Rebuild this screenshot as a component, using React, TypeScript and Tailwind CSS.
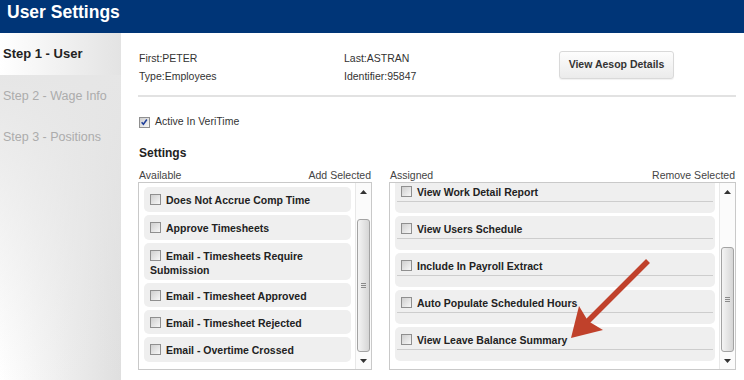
import React from "react";

function Box({ checked = false }: { checked?: boolean }) {
  return (
    <span className="relative inline-block w-[11px] h-[11px] border border-[#8f8f8f] bg-linear-to-br from-[#cfcfcf] to-[#f7f7f7] align-[-1px] mr-[5px] shrink-0">
      {checked && (
        <svg viewBox="0 0 10 10" className="absolute left-0 top-0 w-[9px] h-[9px]">
          <path d="M1.8 4.6 L3.8 7 L7.6 1.6" fill="none" stroke="#21409a" strokeWidth="1.7" />
        </svg>
      )}
    </span>
  );
}

function Arrow({ up }: { up: boolean }) {
  return (
    <div className="h-[17px] flex items-center justify-center">
      <svg width="7" height="4" viewBox="0 0 7 4">
        {up ? <polygon points="0,4 7,4 3.5,0" fill="#333" /> : <polygon points="0,0 7,0 3.5,4" fill="#333" />}
      </svg>
    </div>
  );
}

function Scrollbar({ offset }: { offset: "left" | "right" }) {
  return (
    <div className="w-[16px] flex flex-col bg-[#fbfbfb] border-l border-[#e8e8e8]">
      <Arrow up />
      <div className={"flex-1 flex flex-col " + (offset === "left" ? "pt-[19px]" : "pt-[47px]")}>
        <div className="flex-1 mx-[1px] rounded-[3px] border border-[#a3a3a3] bg-linear-to-r from-[#f4f4f4] to-[#d6d6d6] flex flex-col items-center justify-center gap-[1px]">
          <div className="w-[5px] h-px bg-[#8a8a8a]" />
          <div className="w-[5px] h-px bg-[#8a8a8a]" />
          <div className="w-[5px] h-px bg-[#8a8a8a]" />
        </div>
      </div>
      <Arrow up={false} />
    </div>
  );
}

const leftItems: { t: string; pb: string }[] = [
  { t: "Does Not Accrue Comp Time", pb: "pb-[5px]" },
  { t: "Approve Timesheets", pb: "pb-[5px]" },
  { t: "Email - Timesheets Require Submission", pb: "pb-[3px]" },
  { t: "Email - Timesheet Approved", pb: "pb-[4px]" },
  { t: "Email - Timesheet Rejected", pb: "pb-[4px]" },
  { t: "Email - Overtime Crossed", pb: "pb-[5px]" },
];

const rightItems = [
  "View Work Detail Report",
  "View Users Schedule",
  "Include In Payroll Extract",
  "Auto Populate Scheduled Hours",
  "View Leave Balance Summary",
];

export default function App() {
  return (
    <div className="relative w-[744px] h-[380px] overflow-hidden bg-white font-['Liberation_Sans',Arial,sans-serif] text-[#333]">
      <div className="h-[33px] bg-[#003577] text-white font-bold text-[17.5px] leading-[20px] pt-[2px] pl-[7px]">
        User Settings
      </div>
      <div className="flex h-[347px]">
        <div className="w-[121px] flex flex-col bg-linear-to-r from-white to-[#dfdfdf]">
          <div className="h-[42px] flex items-center pl-[3px] bg-linear-to-r from-white to-[#e3e3e3] text-[13px] font-bold text-[#222]">
            Step 1 - User
          </div>
          <div className="flex-1 flex flex-col bg-linear-to-b from-[#e6e6e6] to-[#e6e6e600] text-[12.5px] text-[#acacac]">
            <div className="h-[42px] flex items-center pl-[3px]">Step 2 - Wage Info</div>
            <div className="h-[40px] flex items-center pl-[3px]">Step 3 - Positions</div>
          </div>
        </div>
        <div className="flex-1 pl-[17px] pr-[8px] pt-[16px] text-[10.5px]">
          <div className="flex">
            <div className="w-[206px] pl-[1px] leading-[18px]">
              <div>First:PETER</div>
              <div>Type:Employees</div>
            </div>
            <div className="w-[215px] leading-[18px]">
              <div>Last:ASTRAN</div>
              <div>Identifier:95847</div>
            </div>
            <div className="pt-[2px]">
              <div className="w-[115px] h-[28px] rounded-[3px] border border-[#d9d9d9] bg-linear-to-b from-[#fdfdfd] to-[#ebebeb] shadow-[0_1px_1px_rgba(0,0,0,0.06)] flex items-center justify-center font-bold text-[#333]">
                View Aesop Details
              </div>
            </div>
          </div>
          <div className="mt-[10px] h-[2px] bg-[#e2e2e2]" />
          <div className="mt-[17px] h-[16px] flex items-center pl-[1px]">
            <Box checked />
            <span>Active In VeriTime</span>
          </div>
          <div className="mt-[15px] leading-[16px] text-[12px] font-bold text-[#222] pl-[1px]">Settings</div>
          <div className="mt-[8px] flex gap-[17px]">
            <div className="w-[234px]">
              <div className="flex justify-between leading-[13px] text-[#444] px-[1px]">
                <span>Available</span>
                <span>Add Selected</span>
              </div>
              <div className="h-[188px] border border-[#c9c9c9] flex">
                <div className="flex-1 pl-[5px] pt-[4px] flex flex-col gap-[3px] overflow-hidden">
                  {leftItems.map((it) => (
                    <div key={it.t} className={"rounded-[5px] bg-[#efefef] pl-[6px] pr-[4px] pt-[6px] leading-[14px] font-bold text-[#222] " + it.pb}>
                      <Box />
                      {it.t}
                    </div>
                  ))}
                </div>
                <div className="ml-[4px] flex">
                  <Scrollbar offset="left" />
                </div>
              </div>
            </div>
            <div className="w-[347px]">
              <div className="flex justify-between leading-[13px] text-[#444] px-[1px]">
                <span>Assigned</span>
                <span>Remove Selected</span>
              </div>
              <div className="h-[188px] border border-[#c9c9c9] flex">
                <div className="flex-1 pl-[5px] overflow-hidden">
                  <div className="-mt-[4px] flex flex-col gap-[3px]">
                    {rightItems.map((t) => (
                      <div key={t} className="h-[34px] rounded-[5px] bg-[#efefef] pt-[6px]">
                        <div className="pl-[6px] leading-[14px] font-bold text-[#222] whitespace-nowrap">
                          <Box />
                          {t}
                        </div>
                        <div className="mt-[2px] mx-[2px] h-px bg-[#cdcdcd]" />
                      </div>
                    ))}
                  </div>
                </div>
                <div className="ml-[4px] flex">
                  <Scrollbar offset="right" />
                </div>
              </div>
            </div>
          </div>
        </div>
      </div>
      <svg className="absolute left-0 top-0 pointer-events-none" width="744" height="380" viewBox="0 0 744 380">
        <line x1="648" y1="261" x2="586" y2="323" stroke="#c0412b" strokeWidth="5.5" />
        <polygon points="571,338 579,306 588,321 603,330" fill="#c0412b" />
      </svg>
    </div>
  );
}
